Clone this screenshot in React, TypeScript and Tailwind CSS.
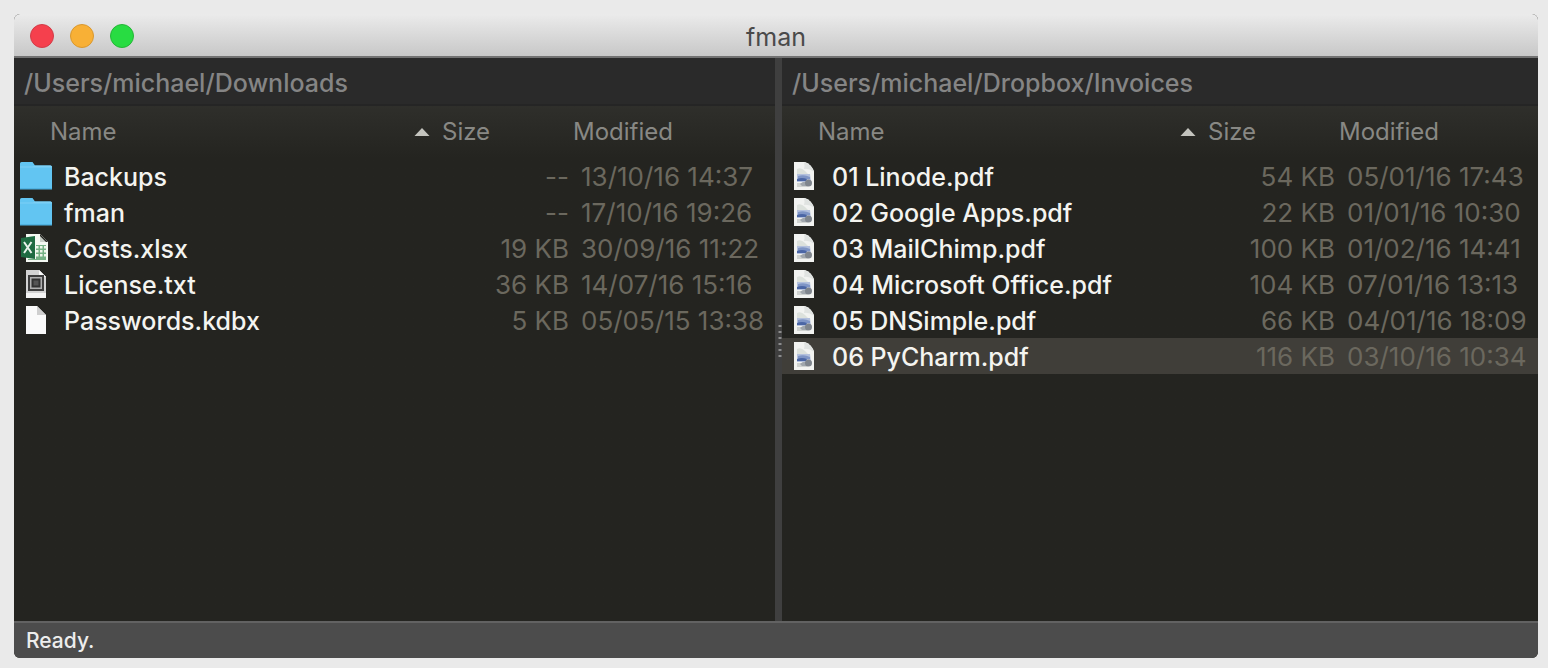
import React from "react";

type IconKind = "folder" | "sheet" | "text" | "blank" | "pdf";

interface Entry {
  icon: IconKind;
  name: string;
  size: string;
  modified: string;
}

const downloads: Entry[] = [
  { icon: "folder", name: "Backups", size: "--", modified: "13/10/16 14:37" },
  { icon: "folder", name: "fman", size: "--", modified: "17/10/16 19:26" },
  { icon: "sheet", name: "Costs.xlsx", size: "19 KB", modified: "30/09/16 11:22" },
  { icon: "text", name: "License.txt", size: "36 KB", modified: "14/07/16 15:16" },
  { icon: "blank", name: "Passwords.kdbx", size: "5 KB", modified: "05/05/15 13:38" },
];

const invoices: Entry[] = [
  { icon: "pdf", name: "01 Linode.pdf", size: "54 KB", modified: "05/01/16 17:43" },
  { icon: "pdf", name: "02 Google Apps.pdf", size: "22 KB", modified: "01/01/16 10:30" },
  { icon: "pdf", name: "03 MailChimp.pdf", size: "100 KB", modified: "01/02/16 14:41" },
  { icon: "pdf", name: "04 Microsoft Office.pdf", size: "104 KB", modified: "07/01/16 13:13" },
  { icon: "pdf", name: "05 DNSimple.pdf", size: "66 KB", modified: "04/01/16 18:09" },
  { icon: "pdf", name: "06 PyCharm.pdf", size: "116 KB", modified: "03/10/16 10:34" },
];

function FileIcon({ kind }: { kind: IconKind }) {
  return (
    <svg viewBox="0 0 32 32" className="size-8 shrink-0" aria-hidden="true">
      {kind === "folder" && (
        <>
          <path d="M0 3.5Q0 2 1.500 2H12.500L15 5.500H30.500Q32 5.500 32 7V29H0Z" fill="#62c5f2" />
          <path d="M0 6.500H13L15 5.500H30.500Q32 5.500 32 7V7.500H0Z" fill="#7dd0f5" />
          <path d="M0 28H32V29.500H0Z" fill="#4fb3e2" />
        </>
      )}
      {kind === "sheet" && (
        <>
          <path d="M6 2H20L28 10V30H6Z" fill="#f4f8f2" />
          <path d="M20 2V10H28Z" fill="#c9cfc8" />
          <path d="M20 2L28 10H26L20 4Z" fill="#242420" />
          <path d="M16 13H26V28H8V27H16Z" fill="#74b184" />
          <path d="M16 14h2.500v2.500h-2.500zM20 14h2.500v2.500h-2.500zM24 14h2v2.500h-2zM16 18h2.500v2.500h-2.500zM20 18h2.500v2.500h-2.500zM24 18h2v2.500h-2zM16 22h2.500v2.500h-2.500zM20 22h2.500v2.500h-2.500zM24 22h2v2.500h-2z" fill="#edf5ea" />
          <path d="M1 6L15 4V27L1 25Z" fill="#1f6b42" />
          <path d="M4 10L11.500 21M11.500 10L4 21" stroke="#e9f2eb" strokeWidth="2" />
        </>
      )}
      {kind === "text" && (
        <>
          <path d="M6 2H19L26 9V30H6Z" fill="#f4f4f4" />
          <path d="M6 2H19L26 9V25H6Z" fill="#d3d3d3" />
          <path d="M19 2V9H26Z" fill="#f7f7f7" />
          <rect x="9" y="8" width="14" height="14" fill="#b0b0b0" stroke="#3e3e3e" strokeWidth="2" />
          <rect x="12.500" y="11.500" width="7" height="7" fill="#555" stroke="#333" strokeWidth="2" />
        </>
      )}
      {kind === "blank" && (
        <>
          <path d="M6 2H17L26 11V30H6Z" fill="#fafafa" />
          <path d="M17 2V11H26Z" fill="#cfcfcf" />
        </>
      )}
      {kind === "pdf" && (
        <>
          <path d="M6 2H17Q23 4 26 11V30H6Z" fill="#f2f3f1" />
          <path d="M16 2Q17 6 16 9Q21 8 26 12Q23 4 16 2Z" fill="#e0e3e1" />
          <path d="M9 9Q13 7 17 11L20 14H9Z" fill="#dce1dc" />
          <path d="M9 14H22L23 22H9Z" fill="#b3c0dd" />
          <path d="M10 16Q16 14 22 17V19H10Z" fill="#7f95c6" />
          <path d="M9 19Q14 17 19 19L18 21H9Z" fill="#4b66a5" />
          <path d="M9 23H17L20 27H9Z" fill="#cfd2d0" />
          <path d="M12 24Q16 20 20 23L19 26H14Z" fill="#a0a6ac" />
          <circle cx="20.500" cy="23" r="3.500" fill="#7f858d" />
        </>
      )}
    </svg>
  );
}

interface PaneProps {
  id: string;
  path: string;
  entries: Entry[];
  selected?: string;
  modifiedColumn: string;
}

function Pane({ id, path, entries, selected, modifiedColumn }: PaneProps) {
  return (
    <section aria-label={path} className="flex min-w-0 flex-col bg-[#242420]">
      <input
        id={id}
        aria-label="Location"
        readOnly
        value={path}
        className="h-12 w-full border-b-2 border-[#252525] bg-[#2a2a2a] px-2.5 pt-1 text-[25px] font-medium text-[#858585] outline-none"
      />
      <div className="flex-1 bg-linear-to-b from-[#2f2f2b] to-[#242420] to-[52px]">
        <table className="w-full table-fixed border-collapse whitespace-nowrap">
          <colgroup>
            <col />
            <col className="w-[131px]" />
            <col className={modifiedColumn} />
          </colgroup>
          <thead>
            <tr className="h-[52px] text-left text-2xl text-[#888884]">
              <th scope="col" aria-sort="ascending" className="p-0 pr-2 pl-9 font-normal">
                <button type="button" className="flex w-full items-center justify-between">
                  Name
                  <svg viewBox="0 0 16 8" className="h-2 w-4" aria-hidden="true">
                    <path d="M0.500 8L8 0L15.500 8Z" fill="#c4c4be" />
                  </svg>
                </button>
              </th>
              <th scope="col" className="p-0 pl-1 font-normal">
                <button type="button">Size</button>
              </th>
              <th scope="col" className="p-0 pl-1 font-normal">
                <button type="button">Modified</button>
              </th>
            </tr>
          </thead>
          <tbody>
            {entries.map((e) => (
              <tr key={e.name} className={e.name === selected ? "h-9 bg-[#403e39]" : "h-9"}>
                <td className="p-0 pl-1.5">
                  <div className="flex items-center gap-3 text-[25px] leading-8 font-medium text-[#f4f4f0]">
                    <FileIcon kind={e.icon} />
                    <span className="pt-0.5">{e.name}</span>
                  </div>
                </td>
                <td className="p-0 pt-0.5 text-right text-[26px] leading-8 text-[#6b685e]">{e.size}</td>
                <td className="p-0 pt-0.5 pl-3 text-[26px] leading-8 text-[#6b685e]">{e.modified}</td>
              </tr>
            ))}
          </tbody>
        </table>
      </div>
    </section>
  );
}

export default function App() {
  return (
    <div className="flex h-screen flex-col bg-[#eaeaea] pt-3.5 pr-2.5 pb-2.5 pl-3.5 font-['Inter',sans-serif]">
      <main className="flex min-h-0 flex-1 flex-col overflow-hidden rounded-md bg-[#242420]">
        <header className="grid h-11 shrink-0 grid-cols-[1fr_auto_1fr] items-center border-b-2 border-[#727272] bg-linear-to-b from-[#ebebeb] to-[#c8c8c8] px-4 pt-0.5">
          <div className="flex gap-4">
            <button type="button" aria-label="Close" className="size-6 rounded-full border border-[#d23c48] bg-[#f5404d]" />
            <button type="button" aria-label="Minimize" className="size-6 rounded-full border border-[#d9982f] bg-[#f8b036]" />
            <button type="button" aria-label="Zoom" className="size-6 rounded-full border border-[#25b637] bg-[#28dc42]" />
          </div>
          <h1 className="pt-0.5 text-[25px] leading-8 text-[#4a4a4a]">fman</h1>
        </header>
        <div className="grid min-h-0 flex-1 grid-cols-[761fr_7px_756fr]">
          <Pane id="left-path" path="/Users/michael/Downloads" entries={downloads} modifiedColumn="w-[206px]" />
          <div role="separator" aria-orientation="vertical" className="flex items-center justify-end bg-[#3f3f3f] pt-1">
            <svg viewBox="0 0 4 36" className="h-9 w-1" aria-hidden="true">
              <path d="M2 1V36" stroke="#8c8c8c" strokeWidth="3" strokeDasharray="2 4" />
            </svg>
          </div>
          <Pane
            id="right-path"
            path="/Users/michael/Dropbox/Invoices"
            entries={invoices}
            selected="06 PyCharm.pdf"
            modifiedColumn="w-[203px]"
          />
        </div>
        <footer className="flex h-[37px] shrink-0 items-center border-t-2 border-[#626262] bg-[#4c4c4c] px-3 text-[21px] font-medium text-[#ededed]">
          Ready.
        </footer>
      </main>
    </div>
  );
}
